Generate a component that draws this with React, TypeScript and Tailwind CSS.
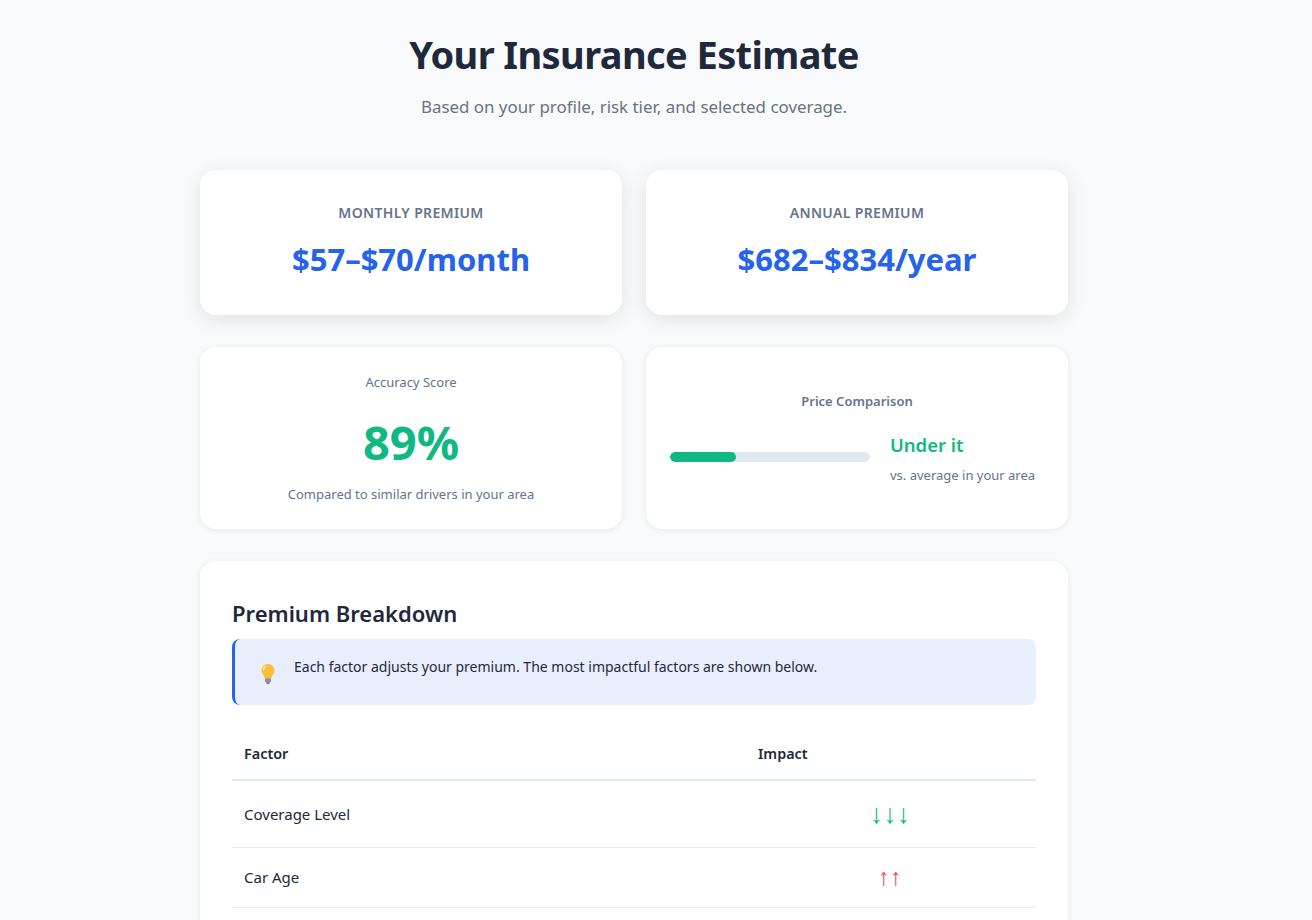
import React from 'react';

function BulbIcon() {
  return (
    <svg width="16" height="22" viewBox="0 0 16 22" aria-hidden="true">
      <path d="M8 1a6.6 6.6 0 0 0-6.6 6.6c0 2.6 1.5 3.9 2.4 5.4.5.8.7 1.5.8 2.2h6.8c.1-.7.3-1.4.8-2.2.9-1.5 2.4-2.8 2.4-5.4A6.6 6.6 0 0 0 8 1z" fill="#fbbf3c" />
      <path d="M5 3.4a4.6 4.6 0 0 0-1.4 3.4" stroke="#ffe9a8" strokeWidth="1.4" fill="none" strokeLinecap="round" />
      <rect x="5" y="15.2" width="6" height="4" rx="1" fill="#9a86a8" />
      <rect x="6.2" y="19.2" width="3.6" height="1.6" rx="0.8" fill="#6f5f80" />
    </svg>
  );
}

function ImpactRow({ label, arrows, color, height }: { label: string; arrows: string; color: string; height: string }) {
  return (
    <div className={`flex items-center border-b border-[#e2e8f0] ${height}`}>
      <div className="w-[512px] pl-3 text-[15px] text-[#1e293b]">{label}</div>
      <div className={`flex-1 text-center leading-none ${color}`}>{arrows}</div>
    </div>
  );
}

export default function App() {
  return (
    <div className="h-[920px] overflow-hidden bg-[#f8fafc] font-['Noto_Sans',sans-serif] text-[#1e293b]">
      <div className="mx-auto w-[868px] -translate-x-[22px] pt-8">
        <header className="text-center">
          <h1 className="text-[38px] font-bold leading-[44px] tracking-[-0.6px]">Your Insurance Estimate</h1>
          <p className="mt-[18px] text-[16.9px] leading-[26px] text-[#6b7280]">Based on your profile, risk tier, and selected coverage.</p>
        </header>

        <div className="mt-[50px] grid grid-cols-2 gap-6">
          {[
            ['MONTHLY PREMIUM', '$57–$70/month'],
            ['ANNUAL PREMIUM', '$682–$834/year'],
          ].map(([label, price]) => (
            <div key={label} className="flex h-[145px] flex-col items-center rounded-2xl bg-white pt-[33px] shadow-[0_4px_20px_rgba(0,0,0,0.1)]">
              <div className="text-[14px] font-semibold leading-[20px] tracking-[0.35px] text-[#64748b]">{label}</div>
              <div className="mt-[12px] text-[31px] font-bold leading-[48px] text-[#2563eb]">{price}</div>
            </div>
          ))}
        </div>

        <div className="mt-8 grid grid-cols-2 gap-6">
          <div className="flex h-[182px] flex-col items-center rounded-2xl bg-white pt-[25px] shadow-[0_1px_6px_rgba(0,0,0,0.08)]">
            <div className="text-[13px] leading-[20px] text-[#64748b]">Accuracy Score</div>
            <div className="mt-[14px] text-[47px] font-bold leading-[72px] text-[#10b981]">89%</div>
            <div className="mt-[6px] text-[13px] leading-[20px] text-[#64748b]">Compared to similar drivers in your area</div>
          </div>
          <div className="flex h-[182px] flex-col rounded-2xl bg-white px-6 pt-[44px] shadow-[0_1px_6px_rgba(0,0,0,0.08)]">
            <div className="text-center text-[13px] font-semibold leading-[20px] text-[#64748b]">Price Comparison</div>
            <div className="mt-[17px] flex items-center gap-5">
              <div className="h-2.5 w-[200px] overflow-hidden rounded-full bg-[#e2e8f0]">
                <div className="h-full w-[33%] rounded-full bg-[#10b981]" />
              </div>
              <div className="pt-[2px]">
                <div className="text-[18.5px] font-semibold leading-[30px] text-[#10b981]">Under it</div>
                <div className="mt-[5px] text-[13px] leading-[20px] text-[#64748b]">vs. average in your area</div>
              </div>
            </div>
          </div>
        </div>

        <section className="mt-8 rounded-2xl bg-white px-8 pt-8 shadow-[0_1px_6px_rgba(0,0,0,0.08)]">
          <h2 className="text-[22px] font-semibold leading-[40px]">Premium Breakdown</h2>
          <div className="mt-[6px] flex h-[66px] rounded-lg border-l-[3px] border-[#2563eb] bg-[#e8eefb] pl-[25px]">
            <div className="pt-[24px]"><BulbIcon /></div>
            <p className="ml-[18px] pt-[17px] text-[14px] leading-[22px]">Each factor adjusts your premium. The most impactful factors are shown below.</p>
          </div>
          <div className="mt-6">
            <div className="flex h-[52px] items-center border-b-2 border-[#e2e8f0] text-[14.4px] font-semibold">
              <div className="w-[526px] pl-3">Factor</div>
              <div>Impact</div>
            </div>
            <ImpactRow label="Coverage Level" arrows="↓↓↓" color="pb-1 text-[27px] text-[#10b981]" height="h-[67px]" />
            <ImpactRow label="Car Age" arrows="↑↑" color="pb-1 text-[24px] text-[#f43f5e]" height="h-[60px]" />
            <div className="h-[60px]" />
          </div>
        </section>
      </div>
    </div>
  );
}
